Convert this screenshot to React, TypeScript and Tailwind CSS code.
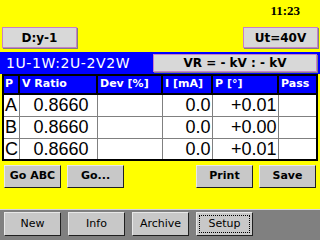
import React from 'react';

const font = { fontFamily: '"DejaVu Sans", Verdana, sans-serif' };

function TopButton({ label, className }: Readonly<{ label: string; className: string }>) {
  return (
    <div
      className={`flex items-center justify-center border border-[#c880c8] bg-[#d8d8d8] text-[12px] font-bold text-black shadow-[1px_1px_0_#808080] ${className}`}
    >
      {label}
    </div>
  );
}

function ActionButton({ label, className }: Readonly<{ label: string; className: string }>) {
  return (
    <div
      className={`flex h-[23px] w-[57px] items-center justify-center border border-t-[#e8e8e8] border-l-[#e8e8e8] border-r-[#202020] border-b-[#202020] bg-[#c8c8c8] text-[11px] font-bold text-black ${className}`}
    >
      {label}
    </div>
  );
}

function TabButton({ label, active }: Readonly<{ label: string; active?: boolean }>) {
  return (
    <div className="flex h-[24px] w-[57px] items-center justify-center border border-t-[#e8e8e8] border-l-[#e8e8e8] border-r-[#202020] border-b-[#202020] bg-[#c8c8c8] p-[2px] text-[11px] text-black">
      <div
        className={`flex h-full w-full items-center justify-center ${active ? 'border border-dotted border-black' : ''}`}
      >
        {label}
      </div>
    </div>
  );
}

const rows = [
  { p: 'A', ratio: '0.8660', i: '0.0', deg: '+0.01' },
  { p: 'B', ratio: '0.8660', i: '0.0', deg: '+0.00' },
  { p: 'C', ratio: '0.8660', i: '0.0', deg: '+0.01' },
];

export default function App() {
  return (
    <div className="flex h-[240px] w-[320px] flex-col overflow-hidden bg-[#ffff00]" style={font}>
      <div className="flex h-[27px] justify-end pr-[20px] pt-[1px]">
        <span className="text-[13px] font-bold text-black" style={{ fontFamily: '"Liberation Serif", serif' }}>
          11:23
        </span>
      </div>
      <div className="flex justify-between px-[2px]">
        <TopButton label="D:y-1" className="h-[21px] w-[75px]" />
        <TopButton label="Ut=40V" className="h-[21px] w-[75px]" />
      </div>
      <div className="mt-[4px] flex h-[22px] items-center justify-between bg-[#0000ff] pl-[6px] pr-[3px]">
        <span className="text-[14px] tracking-[0.6px] text-white">1U-1W:2U-2V2W</span>
        <TopButton label="VR = - kV : - kV" className="h-[18px] w-[164px]" />
      </div>
      <div className="px-[2px]">
        <table className="w-[316px] table-fixed border-collapse border-2 border-black bg-white text-black">
          <colgroup>
            <col className="w-[16px]" />
            <col className="w-[78px]" />
            <col className="w-[65px]" />
            <col className="w-[50px]" />
            <col className="w-[66px]" />
            <col />
          </colgroup>
          <thead>
            <tr className="h-[19px] bg-[#0000ff] text-left text-[11px] font-bold text-white">
              <th className="border-r-2 border-b-2 border-black pl-[1px]">P</th>
              <th className="border-r-2 border-b-2 border-black pl-[2px]">V Ratio</th>
              <th className="border-r-2 border-b-2 border-black pl-[2px]">Dev [%]</th>
              <th className="border-r-2 border-b-2 border-black pl-[2px]">I [mA]</th>
              <th className="border-r-2 border-b-2 border-black pl-[2px]">P [°]</th>
              <th className="border-b-2 border-black pl-[2px]">Pass</th>
            </tr>
          </thead>
          <tbody className="text-[18px] leading-none" style={{ fontFamily: '"Liberation Sans", Arial, sans-serif' }}>
            {rows.map((r, idx) => (
              <tr key={r.p} className={`h-[22px] ${idx < 2 ? 'border-b border-[#808080]' : ''}`}>
                <td className="border-r border-[#808080] pl-[1px]">{r.p}</td>
                <td className="border-r border-[#808080] pr-[8px] text-right">{r.ratio}</td>
                <td className="border-r border-[#808080]" />
                <td className="border-r border-[#808080] pr-[1px] text-right">{r.i}</td>
                <td className="border-r border-[#808080] pr-[1px] text-right">{r.deg}</td>
                <td />
              </tr>
            ))}
          </tbody>
        </table>
      </div>
      <div className="mt-[4px] flex px-[4px]">
        <ActionButton label="Go ABC" className="" />
        <ActionButton label="Go..." className="ml-[6px]" />
        <div className="flex-1" />
        <ActionButton label="Print" className="" />
        <ActionButton label="Save" className="ml-[6px]" />
      </div>
      <div className="flex-1" />
      <div className="flex h-[31px] items-start gap-[7px] border-t border-[#d8d8d8] bg-[#808080] pl-[4px] pt-[2px]">
        <TabButton label="New" />
        <TabButton label="Info" />
        <TabButton label="Archive" />
        <TabButton label="Setup" active />
      </div>
    </div>
  );
}
